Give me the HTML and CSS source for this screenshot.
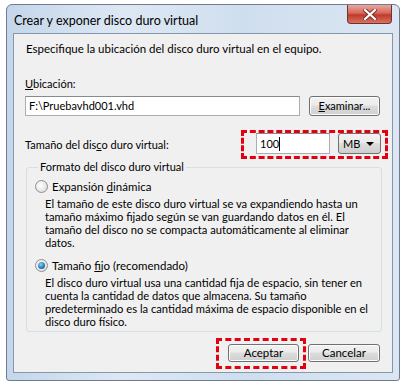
FILE: index.html
```html
<!DOCTYPE html>
<html lang="es">
<head>
    <meta charset="UTF-8">
    <title>Crear y exponer disco duro virtual</title>
    <link rel="stylesheet" href="styles.css">
</head>
<body>
    <div class="window">
        <div class="titlebar">
            <span class="title">Crear y exponer disco duro virtual</span>
            <div class="close-btn">
                <svg width="14" height="11" viewBox="0 0 14 11">
                    <path d="M2 1 L12 10 M12 1 L2 10" stroke="#7a2d2d" stroke-width="4" stroke-linecap="square"/>
                    <path d="M2 1 L12 10 M12 1 L2 10" stroke="#ffffff" stroke-width="2.2" stroke-linecap="square"/>
                </svg>
            </div>
        </div>
        <div class="client">
            <p class="intro">Especifique la ubicación del disco duro virtual en el equipo.</p>

            <label class="field-label"><u>U</u>bicación:</label>
            <div class="row">
                <div class="textbox path">F:\Pruebavhd001.vhd</div>
                <div class="button browse"><u>E</u>xaminar...</div>
            </div>

            <div class="row size-row">
                <span class="size-label">Tamaño del dis<u>c</u>o duro virtual:</span>
                <div class="mark size-mark">
                    <div class="textbox size">100<span class="caret"></span></div>
                    <div class="combo">MB<span class="arrow"></span></div>
                </div>
            </div>

            <fieldset class="group">
                <legend>Formato del disco duro virtual</legend>
                <div class="option">
                    <span class="radio"></span>
                    <span>Expansión <u>d</u>inámica</span>
                </div>
                <p class="desc">El tamaño de este disco duro virtual se va expandiendo hasta un tamaño máximo fijado según se van guardando datos en él. El tamaño del disco no se compacta automáticamente al eliminar datos.</p>
                <div class="option">
                    <span class="radio checked"></span>
                    <span>Tamaño <u>f</u>ijo (recomendado)</span>
                </div>
                <p class="desc">El disco duro virtual usa una cantidad fija de espacio, sin tener en cuenta la cantidad de datos que almacena. Su tamaño predeterminado es la cantidad máxima de espacio disponible en el disco duro físico.</p>
            </fieldset>

            <div class="actions">
                <div class="mark ok-mark">
                    <div class="button accept">Aceptar</div>
                </div>
                <div class="button cancel">Cancelar</div>
            </div>
        </div>
    </div>
</body>
</html>
```

FILE: styles.css
```css
body {
    margin: 0;
    background-color: #ffffff;
    font-family: Lato, "Noto Sans", sans-serif;
    font-size: 11px;
    color: #000000;
}

.window {
    margin: 4px 0 0 6px;
    width: 394px;
    height: 377px;
    box-sizing: border-box;
    border: 1px solid #6d7c8f;
    border-radius: 6px 6px 3px 3px;
    background: linear-gradient(90deg, #c5d6ea 0%, #dde8f4 30%, #cfdeee 60%, #dbe6f2 100%);
    padding: 0 6px 7px 6px;
    display: flex;
    flex-direction: column;
}

.titlebar {
    height: 28px;
    display: flex;
    justify-content: space-between;
    align-items: flex-start;
}

.title {
    margin-top: 8px;
    margin-left: 1px;
    font-size: 12.5px;
}

.close-btn {
    width: 43px;
    height: 18px;
    margin-right: 1px;
    border: 1px solid #6b3434;
    border-top: none;
    border-radius: 0 0 4px 4px;
    background: linear-gradient(#e9a89c 0%, #d7665a 45%, #c1392b 55%, #d9735f 100%);
    display: flex;
    justify-content: center;
    align-items: center;
}

.client {
    flex: 1;
    background-color: #f0f0f0;
    border: 1px solid #8498ad;
    padding: 0 10px 0 11px;
    display: flex;
    flex-direction: column;
}

.intro {
    margin: 8px 0 0 1px;
    font-size: 11.5px;
}

.field-label {
    margin-top: 22px;
}

.row {
    display: flex;
    align-items: center;
}

.textbox {
    height: 18px;
    border: 1px solid #abadb3;
    border-top-color: #868a91;
    background-color: #ffffff;
    line-height: 18px;
    padding: 0 3px;
}

.path {
    margin-top: 6px;
    width: 267px;
}

.button {
    height: 18px;
    border: 1px solid #707070;
    border-radius: 3px;
    background: linear-gradient(#f2f2f2 0%, #ebebeb 45%, #dddddd 50%, #cfcfcf 100%);
    box-shadow: inset 0 0 0 1px #fcfcfc;
    line-height: 18px;
    text-align: center;
}

.browse {
    margin: 6px 0 0 9px;
    width: 69px;
}

.size-row {
    margin-top: 14px;
    justify-content: space-between;
}

.mark {
    border: 3px dashed #e3000f;
    display: flex;
}

.size-mark {
    margin-right: -6px;
    padding: 0 4px 2px 12px;
    align-items: center;
}

.size {
    width: 66px;
    height: 19px;
    line-height: 19px;
}

.caret {
    display: inline-block;
    width: 1px;
    height: 14px;
    background: #000000;
    vertical-align: -3px;
}

.combo {
    margin-left: 8px;
    width: 37px;
    height: 19px;
    border: 1px solid #707070;
    border-radius: 3px;
    background: linear-gradient(#f2f2f2 0%, #ebebeb 45%, #dddddd 50%, #cfcfcf 100%);
    line-height: 19px;
    padding-left: 4px;
    position: relative;
}

.arrow {
    position: absolute;
    right: 6px;
    top: 8px;
    border-left: 4px solid transparent;
    border-right: 4px solid transparent;
    border-top: 4px solid #000000;
}

.group {
    margin: 0 0 0 1px;
    width: 356px;
    box-sizing: border-box;
    border: 1px solid #d5dfe5;
    border-radius: 3px;
    padding: 0 6px 3px 8px;
}

.group legend {
    padding: 0 2px;
    margin-left: 3px;
    line-height: 16px;
}

.option {
    display: flex;
    align-items: center;
    margin-top: 3px;
    height: 16px;
    font-size: 11.5px;
}

.option + .desc {
    margin-top: 3px;
}

.radio {
    width: 11px;
    height: 11px;
    border: 1px solid #8e8f8f;
    border-radius: 50%;
    background: radial-gradient(circle at 40% 40%, #ffffff 0%, #e6e6e6 60%, #cfcfcf 100%);
    margin-right: 4px;
    position: relative;
}

.radio.checked::after {
    content: "";
    position: absolute;
    left: 2px;
    top: 2px;
    width: 7px;
    height: 7px;
    border-radius: 50%;
    background: radial-gradient(circle at 40% 35%, #8fd1f5 0%, #2a7fbd 55%, #0f4d82 100%);
}

.desc {
    margin: 0 0 0 10px;
    line-height: 13px;
    font-size: 11.2px;
}

.desc + .option {
    margin-top: 8px;
}

.actions {
    margin-top: 6px;
    padding-right: 2px;
    display: flex;
    justify-content: flex-end;
    align-items: flex-start;
}

.ok-mark {
    padding: 3px 4px 4px 9px;
}

.accept {
    width: 69px;
    height: 16px;
    line-height: 16px;
    font-size: 11.5px;
}

.cancel {
    margin: 6px 0 0 2px;
    width: 70px;
    height: 16px;
    line-height: 16px;
    font-size: 11.5px;
}
```
